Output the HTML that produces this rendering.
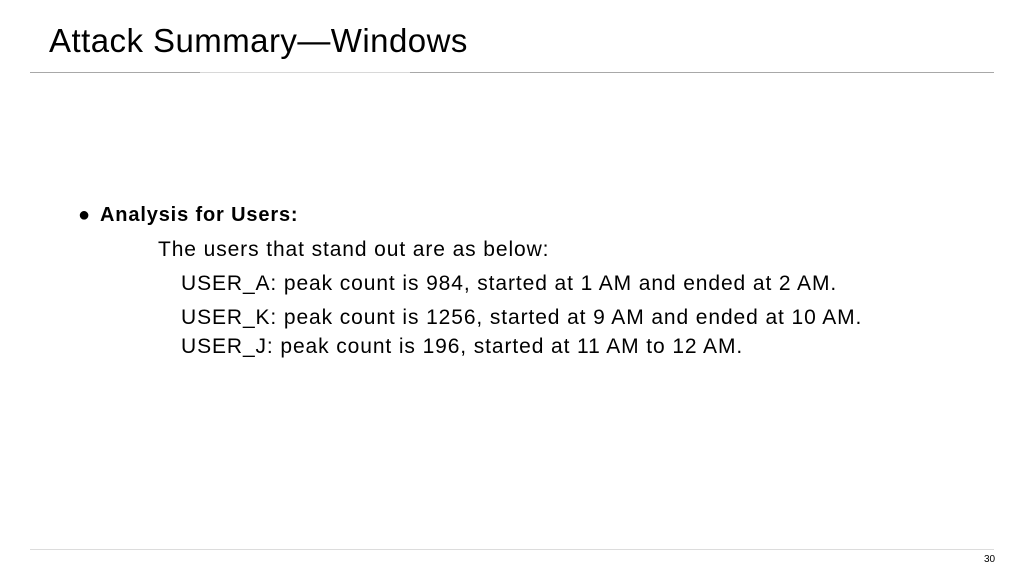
<!DOCTYPE html>
<html><head><style>
body{margin:0;width:1024px;height:576px;background:#fff;position:relative;overflow:hidden;font-family:"Liberation Sans",Arial,sans-serif;color:#000}
.t{position:absolute;white-space:nowrap}
.b{font-size:21px;letter-spacing:0.9px}
</style></head><body>
<div class="t" style="left:49px;top:22px;font-size:33px;letter-spacing:0.45px">Attack Summary—Windows</div>
<div style="position:absolute;left:30px;top:72px;width:964px;height:1px;background:#a8a8a8"></div>
<div style="position:absolute;left:200px;top:72px;width:210px;height:1px;background:#d8d8d8"></div>
<div class="t" style="left:78px;top:204px;font-size:20px">●</div>
<div class="t" style="left:100px;top:204px;font-size:20px;font-weight:bold;letter-spacing:0.85px">Analysis for Users:</div>
<div class="t b" style="left:158px;top:238px">The users that stand out are as below:</div>
<div class="t b" style="left:181px;top:272px">USER_A: peak count is 984, started at 1 AM and ended at 2 AM.</div>
<div class="t b" style="left:181px;top:306px">USER_K: peak count is 1256, started at 9 AM and ended at 10 AM.</div>
<div class="t b" style="left:181px;top:335px">USER_J: peak count is 196, started at 11 AM to 12 AM.</div>
<div style="position:absolute;left:30px;top:549px;width:964px;height:1px;background:#dcdcdc"></div>
<div class="t" style="left:984px;top:554px;font-size:10px">30</div>
</body></html>
